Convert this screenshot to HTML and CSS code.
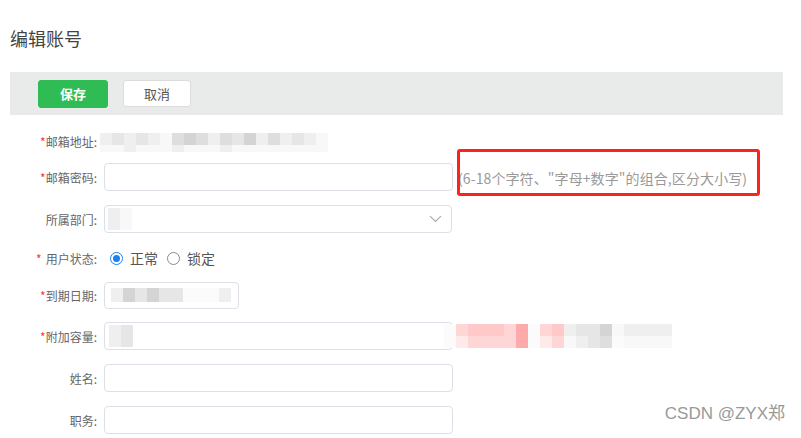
FILE: index.html
```html
<!DOCTYPE html>
<html lang="zh-CN">
<head>
<meta charset="utf-8">
<title>编辑账号</title>
<link rel="stylesheet" href="styles.css">
</head>
<body>
<div class="page">
  <h1 class="title">编辑账号</h1>
  <div class="toolbar">
    <button class="btn btn-save" type="button">保存</button>
    <button class="btn btn-cancel" type="button">取消</button>
  </div>
  <form class="form">
    <div class="row row-email">
      <label class="label"><span class="req">*</span>邮箱地址:</label>
      <div class="mosaic mosaic-email">
        <div class="mrow mrow-a">
          <span class="t t1"></span><span class="t t2"></span><span class="t t1"></span><span class="t t2"></span><span class="t t1"></span><span class="t t0"></span><span class="t t3"></span><span class="t t4"></span><span class="t t3"></span><span class="t t1"></span><span class="t t3"></span><span class="t t2"></span><span class="t t4"></span><span class="t t1"></span><span class="t t3"></span><span class="t t1"></span><span class="t t2"></span><span class="t t1"></span><span class="t t0"></span>
        </div>
        <div class="mrow mrow-b">
          <span class="t t0"></span><span class="t t0"></span><span class="t t1"></span><span class="t t0"></span><span class="t t0"></span><span class="t t0"></span><span class="t t1"></span><span class="t t0"></span><span class="t t0"></span><span class="t t0"></span><span class="t t1"></span><span class="t t0"></span><span class="t t0"></span><span class="t t0"></span><span class="t t0"></span><span class="t t0"></span><span class="t t0"></span><span class="t t0"></span><span class="t t0"></span>
        </div>
      </div>
    </div>
    <div class="row row-pass">
      <label class="label"><span class="req">*</span>邮箱密码:</label>
      <input class="input" type="password">
      <div class="hint-wrap">
        <span class="hint">(6-18个字符、"字母+数字"的组合,区分大小写)</span>
        <span class="annot"></span>
      </div>
    </div>
    <div class="row row-dept">
      <label class="label">所属部门:</label>
      <div class="select">
        <div class="mosaic mosaic-dept">
          <span class="t t1 tall"></span><span class="t t0 tall"></span>
        </div>
        <svg class="chev" width="13" height="8" viewBox="0 0 13 8"><path d="M1 1.2 L6.5 6.5 L12 1.2" fill="none" stroke="#a8a8a8" stroke-width="1.1"/></svg>
      </div>
    </div>
    <div class="row row-status">
      <label class="label"><span class="req req-sp">*</span>用户状态:</label>
      <div class="radios">
        <span class="radio radio-on"></span><span class="rtext">正常</span>
        <span class="radio"></span><span class="rtext">锁定</span>
      </div>
    </div>
    <div class="row row-date">
      <label class="label"><span class="req">*</span>到期日期:</label>
      <div class="input input-date">
        <div class="mosaic mosaic-date">
          <span class="t t1"></span><span class="t t4"></span><span class="t t2"></span><span class="t t4"></span><span class="t t2"></span><span class="t t2"></span><span class="t t5"></span><span class="t t5"></span><span class="t t5"></span><span class="t t1"></span>
        </div>
      </div>
    </div>
    <div class="row row-cap">
      <label class="label"><span class="req">*</span>附加容量:</label>
      <div class="input input-cap">
        <div class="mosaic mosaic-cap">
          <span class="t t1 tall"></span><span class="t t2 tall"></span>
        </div>
      </div>
      <div class="mosaic mosaic-extra">
        <div class="mrow">
          <span class="t t5"></span><span class="t p1"></span><span class="t p2"></span><span class="t p2"></span><span class="t p2"></span><span class="t p1"></span><span class="t p3"></span><span class="t t5"></span><span class="t p1"></span><span class="t p2"></span><span class="t t1"></span><span class="t t2"></span><span class="t t2"></span><span class="t t4"></span><span class="t t0"></span><span class="t t1"></span><span class="t t1"></span><span class="t t1"></span><span class="t t1"></span>
        </div>
        <div class="mrow">
          <span class="t t5"></span><span class="t p0"></span><span class="t p1"></span><span class="t p1"></span><span class="t p1"></span><span class="t p1"></span><span class="t p3"></span><span class="t t5"></span><span class="t p0"></span><span class="t p1"></span><span class="t t0"></span><span class="t t1"></span><span class="t t2"></span><span class="t t3"></span><span class="t t5"></span><span class="t t0"></span><span class="t t0"></span><span class="t t0"></span><span class="t t0"></span>
        </div>
      </div>
    </div>
    <div class="row row-name">
      <label class="label">姓名:</label>
      <input class="input" type="text">
    </div>
    <div class="row row-job">
      <label class="label">职务:</label>
      <input class="input" type="text">
    </div>
  </form>
  <div class="watermark">CSDN @ZYX郑</div>
</div>
</body>
</html>
```
FILE: styles.css
```css
* { box-sizing: border-box; }
html, body {
  margin: 0;
  padding: 0;
  background: #fff;
  font-family: "Noto Sans CJK SC", "Noto Sans", sans-serif;
  color: #333;
  overflow: hidden;
}
.page {
  position: relative;
  width: 801px;
  height: 438px;
  padding: 0 18px 0 10px;
}
.title {
  margin: 0;
  padding-top: 26px;
  font-size: 18px;
  line-height: 24px;
  font-weight: normal;
  color: #444;
}
.toolbar {
  margin-top: 22px;
  height: 43px;
  background: #e9eaea;
  display: flex;
  align-items: center;
  gap: 15px;
  padding-left: 28px;
}
.btn {
  height: 28px;
  border-radius: 3px;
  font-family: inherit;
  font-size: 13px;
  padding: 0;
  cursor: pointer;
}
.btn-save {
  width: 70px;
  background: #2fbc55;
  border: 1px solid #2fbc55;
  color: #fff;
  font-weight: bold;
}
.btn-cancel {
  width: 68px;
  height: 27px;
  background: #fff;
  border: 1px solid #dcdcdc;
  color: #555;
}
.form {
  padding-top: 12px;
}
.row {
  position: relative;
  display: flex;
  align-items: center;
  gap: 7px;
  height: 28px;
}
.row-pass { margin-top: 8px; }
.row-dept { margin-top: 14px; }
.row-status { margin-top: 11px; }
.row-date { margin-top: 9px; }
.row-cap { margin-top: 13px; }
.row-name { margin-top: 14px; }
.row-job { margin-top: 14px; }
.label {
  width: 87px;
  flex: none;
  text-align: right;
  font-size: 12px;
  color: #666;
  white-space: nowrap;
}
.req { color: #f33; }
.req-sp { margin-right: 4px; }
.input {
  width: 349px;
  height: 28px;
  border: 1px solid #dcdfe6;
  border-radius: 4px;
  background: #fff;
  flex: none;
  font-family: inherit;
  padding: 0;
}
.input-date {
  width: 135px;
  height: 27px;
  display: flex;
  align-items: center;
}
.input-cap {
  display: flex;
  align-items: center;
}
.select {
  width: 348px;
  height: 28px;
  border: 1px solid #dcdfe6;
  border-radius: 4px;
  display: flex;
  align-items: center;
  justify-content: space-between;
  padding: 0 9px 0 3px;
  flex: none;
}
.chev { display: block; }
.hint-wrap {
  position: relative;
  margin-left: -2px;
}
.hint {
  font-size: 14px;
  color: #999;
  white-space: nowrap;
  letter-spacing: 0.1px;
}
.annot {
  position: absolute;
  left: -1px;
  top: -16px;
  width: 303px;
  height: 47px;
  border: 3px solid #ff2218;
  border-radius: 3px;
}
.radios {
  display: flex;
  align-items: center;
  padding-left: 6px;
}
.radio {
  width: 13px;
  height: 13px;
  border: 1px solid #8a8a8a;
  border-radius: 50%;
  background: #fff;
  position: relative;
}
.radio-on {
  border-color: #1a82f0;
}
.radio-on::after {
  content: "";
  position: absolute;
  left: 2px;
  top: 2px;
  width: 7px;
  height: 7px;
  border-radius: 50%;
  background: #1a82f0;
}
.rtext {
  font-size: 14px;
  color: #555;
  margin-left: 7px;
  margin-right: 9px;
}
.mosaic { display: flex; }
.mosaic-email {
  flex-direction: column;
  margin-left: -4px;
  margin-top: 3px;
}
.mrow { display: flex; }
.mrow-a .t { width: 12px; height: 12px; }
.mrow-b .t { width: 12px; height: 7px; }
.t { display: block; width: 12px; height: 12px; }
.t0 { background: #f8f8f8; }
.t1 { background: #efefef; }
.t2 { background: #e6e6e6; }
.t3 { background: #dedede; }
.t4 { background: #d4d4d4; }
.t5 { background: #fbfbfb; }
.p0 { background: #ffeaea; }
.p1 { background: #ffd6d6; }
.p2 { background: #ffc9c9; }
.p3 { background: #ffaaaa; }
.tall { height: 22px; }
.mosaic-dept { margin-left: 0; }
.mosaic-date { margin-left: 6px; }
.mosaic-date .t { height: 14px; }
.mosaic-cap { margin-left: 4px; }
.mosaic-extra {
  flex-direction: column;
  margin-left: -16px;
}
.mosaic-extra .t { height: 12px; }
.watermark {
  position: absolute;
  right: 16px;
  bottom: 14px;
  font-family: "Liberation Sans", "Noto Sans CJK SC", sans-serif;
  font-size: 17px;
  color: #999;
  text-shadow: 0 0 1px #fff;
}
```
